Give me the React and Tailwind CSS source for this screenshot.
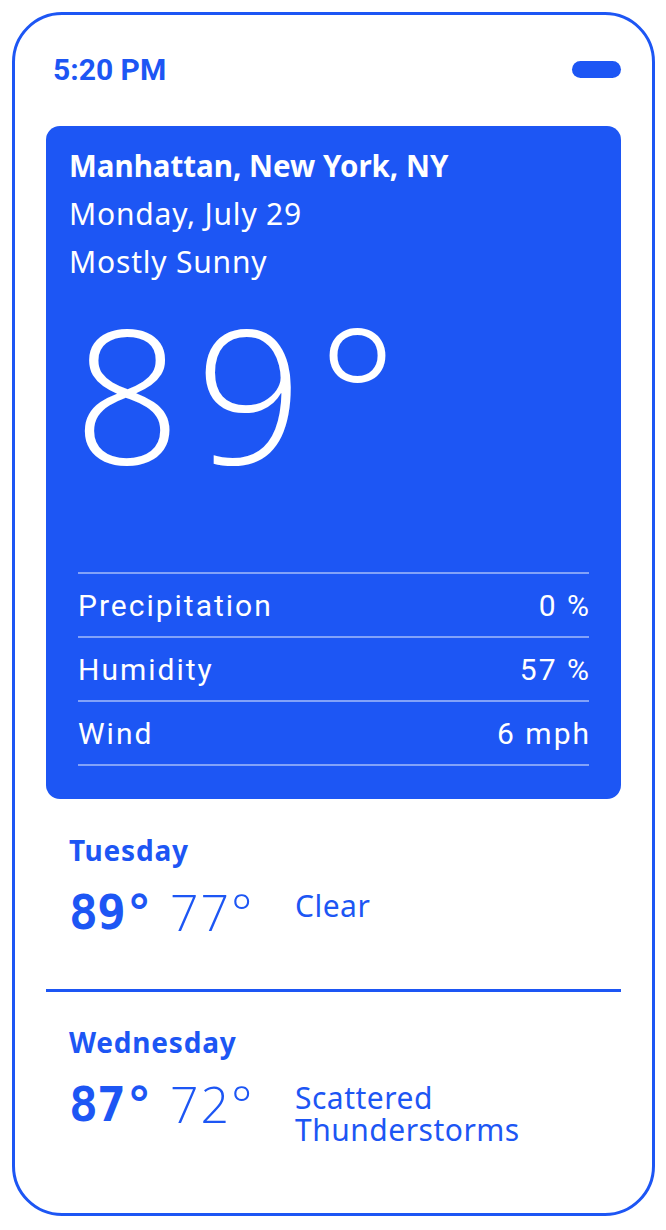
const stats = [
  { label: 'Precipitation', value: '0 %' },
  { label: 'Humidity', value: '57 %' },
  { label: 'Wind', value: '6 mph' },
];

const forecast = [
  { day: 'Tuesday', hi: '89°', lo: '77°', desc: 'Clear' },
  { day: 'Wednesday', hi: '87°', lo: '72°', desc: 'Scattered Thunderstorms' },
];

function ForecastRow({ item }) {
  return (
    <div className="pl-[23px]">
      <div className="text-[28px] leading-[36px] font-bold tracking-[0.8px] text-[#1d56f4]">{item.day}</div>
      <div className="mt-[21px] flex items-start text-[#1d56f4]">
        <div className="w-[101px] text-[48px] leading-[46px] font-bold tracking-[-1px]" style={{ fontFamily: '"DejaVu Sans Mono", monospace' }}>
          {item.hi}
        </div>
        <div className="w-[125px] text-[50px] leading-[46px] font-light tracking-[2px]" style={{ fontFamily: '"Open Sans", sans-serif' }}>
          {item.lo}
        </div>
        <div className="w-[250px] pt-[1px] text-[30px] leading-[32px] tracking-[0.5px]">{item.desc}</div>
      </div>
    </div>
  );
}

export default function App() {
  return (
    <div className="min-h-screen bg-white pt-3 pl-3 pr-[11px] pb-[14px]" style={{ fontFamily: '"Noto Sans", sans-serif' }}>
      <div className="h-[1204px] border-[3px] border-[#1d56f4] rounded-[50px] px-[31px] flex flex-col">
        {/* status bar */}
        <div className="mt-[32px] flex items-center justify-between pl-[7px]">
          <span className="text-[30px] font-bold text-[#1d56f4]" style={{ fontFamily: 'Roboto, sans-serif' }}>
            5:20 PM
          </span>
          <span className="w-[49px] h-[17px] rounded-full bg-[#1d56f4]"></span>
        </div>

        {/* current conditions */}
        <div className="mt-[34px] rounded-[14px] bg-[#1d56f4] text-white px-[23px] pt-[16px] pb-[33px]">
          <div className="text-[29.5px] leading-[48px] font-bold">Manhattan, New York, NY</div>
          <div className="text-[30px] leading-[48px] tracking-[0.8px]">Monday, July 29</div>
          <div className="text-[30px] leading-[48px] tracking-[0.8px]">Mostly Sunny</div>
          <div className="mt-[12px] h-[274px] pl-[5px] text-[187px] leading-[187px] font-light tracking-[15px]" style={{ fontFamily: '"Open Sans", sans-serif' }}>
            89°
          </div>
          <div className="mx-[9px] border-t-2 border-white/45">
            {stats.map((s) => (
              <div key={s.label} className="h-[64px] flex items-center justify-between border-b-2 border-white/45 text-[30px] tracking-[2px]" style={{ fontFamily: 'Roboto, sans-serif' }}>
                <span>{s.label}</span>
                <span className="-mr-[2px]">{s.value}</span>
              </div>
            ))}
          </div>
        </div>

        {/* forecast */}
        <div className="pt-[33px] pb-[54px]">
          <ForecastRow item={forecast[0]} />
        </div>
        <div className="border-t-[3px] border-[#1d56f4]"></div>
        <div className="pt-[32px]">
          <ForecastRow item={forecast[1]} />
        </div>
      </div>
    </div>
  );
}
